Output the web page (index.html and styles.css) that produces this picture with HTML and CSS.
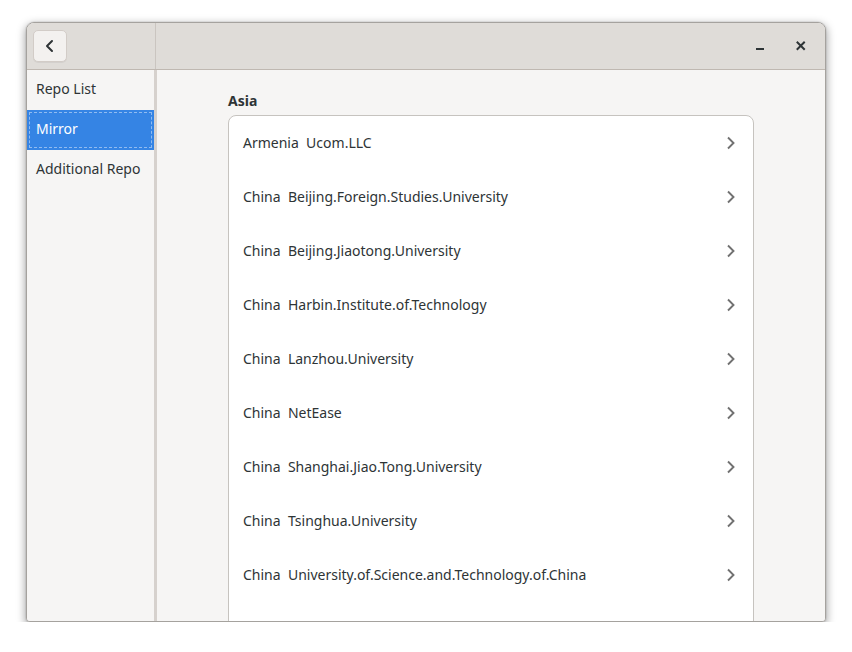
FILE: index.html
```html
<!DOCTYPE html>
<html>
<head>
<meta charset="utf-8">
<link rel="stylesheet" href="styles.css">
</head>
<body>
<div class="window">
  <div class="headerbar">
    <div class="hb-left">
      <button class="back-btn" aria-label="Back">
        <svg width="16" height="16" viewBox="0 0 16 16"><path d="M10 3 L5 8 L10 13" fill="none" stroke="#2e3436" stroke-width="2" stroke-linecap="round" stroke-linejoin="round"/></svg>
      </button>
    </div>
    <div class="hb-sep"></div>
    <div class="hb-right">
      <div class="wc wc-min"><svg width="16" height="16" viewBox="0 0 16 16"><rect x="4" y="10" width="8" height="2" fill="#2e3436"/></svg></div>
      <div class="wc wc-close"><svg width="16" height="16" viewBox="0 0 16 16"><path d="M4.5 4.5 L11 11 M11 4.5 L4.5 11" stroke="#2e3436" stroke-width="2" stroke-linecap="square"/></svg></div>
    </div>
  </div>
  <div class="body">
    <nav class="sidebar">
      <div class="side-row">Repo List</div>
      <div class="side-row selected"><span class="focus">Mirror</span></div>
      <div class="side-row">Additional Repo</div>
    </nav>
    <div class="body-sep"></div>
    <main class="content">
      <div class="clamp">
        <h2 class="group-title">Asia</h2>
        <div class="boxed-list">
          <div class="row"><span>Armenia&nbsp;&nbsp;Ucom.LLC</span><svg class="chev" width="16" height="16" viewBox="0 0 16 16"><path d="M5 2.5 L10.5 8 L5 13.5" fill="none" stroke="#717171" stroke-width="1.9"/></svg></div>
          <div class="row"><span>China&nbsp;&nbsp;Beijing.Foreign.Studies.University</span><svg class="chev" width="16" height="16" viewBox="0 0 16 16"><path d="M5 2.5 L10.5 8 L5 13.5" fill="none" stroke="#717171" stroke-width="1.9"/></svg></div>
          <div class="row"><span>China&nbsp;&nbsp;Beijing.Jiaotong.University</span><svg class="chev" width="16" height="16" viewBox="0 0 16 16"><path d="M5 2.5 L10.5 8 L5 13.5" fill="none" stroke="#717171" stroke-width="1.9"/></svg></div>
          <div class="row"><span>China&nbsp;&nbsp;Harbin.Institute.of.Technology</span><svg class="chev" width="16" height="16" viewBox="0 0 16 16"><path d="M5 2.5 L10.5 8 L5 13.5" fill="none" stroke="#717171" stroke-width="1.9"/></svg></div>
          <div class="row"><span>China&nbsp;&nbsp;Lanzhou.University</span><svg class="chev" width="16" height="16" viewBox="0 0 16 16"><path d="M5 2.5 L10.5 8 L5 13.5" fill="none" stroke="#717171" stroke-width="1.9"/></svg></div>
          <div class="row"><span>China&nbsp;&nbsp;NetEase</span><svg class="chev" width="16" height="16" viewBox="0 0 16 16"><path d="M5 2.5 L10.5 8 L5 13.5" fill="none" stroke="#717171" stroke-width="1.9"/></svg></div>
          <div class="row"><span>China&nbsp;&nbsp;Shanghai.Jiao.Tong.University</span><svg class="chev" width="16" height="16" viewBox="0 0 16 16"><path d="M5 2.5 L10.5 8 L5 13.5" fill="none" stroke="#717171" stroke-width="1.9"/></svg></div>
          <div class="row"><span>China&nbsp;&nbsp;Tsinghua.University</span><svg class="chev" width="16" height="16" viewBox="0 0 16 16"><path d="M5 2.5 L10.5 8 L5 13.5" fill="none" stroke="#717171" stroke-width="1.9"/></svg></div>
          <div class="row"><span>China&nbsp;&nbsp;University.of.Science.and.Technology.of.China</span><svg class="chev" width="16" height="16" viewBox="0 0 16 16"><path d="M5 2.5 L10.5 8 L5 13.5" fill="none" stroke="#717171" stroke-width="1.9"/></svg></div>
          <div class="row"><span></span></div>
        </div>
      </div>
    </main>
  </div>
</div>
</body>
</html>
```
FILE: styles.css
```css
html, body {
  margin: 0;
  padding: 0;
  background: #ffffff;
}
body {
  font-family: "Noto Sans", "DejaVu Sans", sans-serif;
  font-size: 14px;
  color: #2e3436;
  padding: 22px 0 0 26px;
}
.window {
  width: 800px;
  height: 600px;
  box-sizing: border-box;
  border: 1px solid #a5a29e;
  border-radius: 8px 8px 4px 4px;
  background: #f6f5f4;
  overflow: hidden;
  display: flex;
  flex-direction: column;
  box-shadow: 0 3px 9px 1px rgba(0,0,0,0.35), 0 0 0 1px rgba(0,0,0,0.05);
}
.headerbar {
  height: 47px;
  flex: none;
  box-sizing: border-box;
  display: flex;
  background: #dfdcd8;
  border-bottom: 1px solid #bfb8b1;
}
.hb-left {
  width: 127px;
  flex: none;
  display: flex;
  align-items: flex-start;
  padding: 7px 0 0 6px;
  box-sizing: border-box;
}
.back-btn {
  width: 34px;
  height: 32px;
  padding: 0;
  border: 1px solid #d2ccc7;
  border-radius: 5px;
  background: #f3f1ef;
  display: flex;
  align-items: center;
  justify-content: center;
  box-shadow: 0 1px rgba(0,0,0,0.05);
}
.hb-sep {
  width: 1px;
  flex: none;
  margin-left: 1px;
  background: #cac5c0;
}
.hb-right {
  flex: 1;
  display: flex;
  justify-content: flex-end;
  align-items: center;
  padding-right: 16px;
  gap: 25px;
}
.wc {
  width: 16px;
  height: 16px;
  display: flex;
}
.body {
  flex: 1;
  display: flex;
  min-height: 0;
}
.sidebar {
  width: 127px;
  flex: none;
  background: #f6f5f4;
}
.side-row {
  height: 40px;
  display: flex;
  align-items: center;
  padding: 0 0 3px 9px;
  box-sizing: border-box;
}
.side-row.selected {
  background: #3584e4;
  color: #ffffff;
  padding: 2px;
}
.side-row .focus {
  flex: 1;
  height: 100%;
  box-sizing: border-box;
  border: 1px dashed rgba(255,255,255,0.45);
  display: flex;
  align-items: center;
  padding: 0 0 3px 6px;
}
.body-sep {
  width: 3px;
  flex: none;
  background: #d6d1cd;
}
.content {
  flex: 1;
  background: #f6f5f4;
  overflow: hidden;
}
.clamp {
  width: 526px;
  margin: 0 auto;
  padding-top: 22px;
}
.group-title {
  margin: 0 0 5px 0;
  font-size: 14px;
  font-weight: bold;
  line-height: 18px;
  color: #2e3436;
}
.boxed-list {
  background: #ffffff;
  border: 1px solid #c6c3bf;
  border-radius: 8px;
}
.row {
  height: 54px;
  display: flex;
  align-items: center;
  justify-content: space-between;
  padding: 0 14px 2px 14px;
  box-sizing: border-box;
}
.chev {
  flex: none;
  margin-top: 2px;
}
```
